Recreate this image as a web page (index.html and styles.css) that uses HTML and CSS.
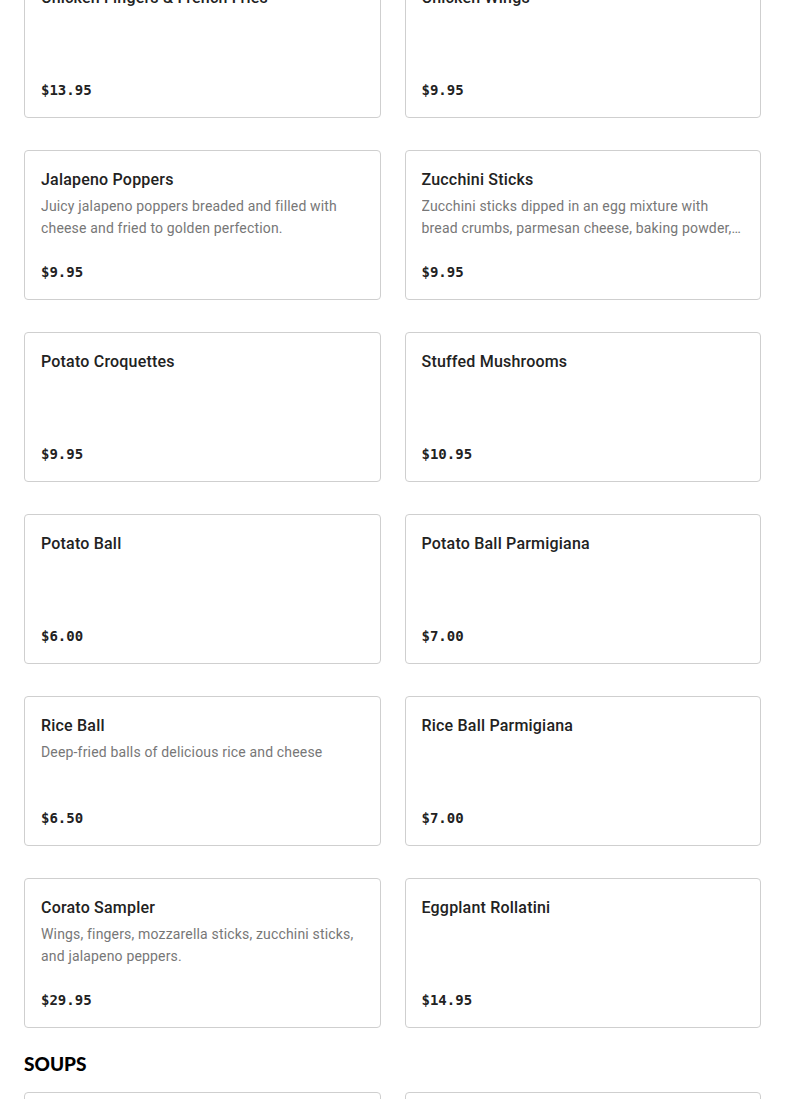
FILE: index.html
```html
<!DOCTYPE html>
<html lang="en">
<head>
<meta charset="utf-8">
<link rel="stylesheet" href="styles.css">
</head>
<body>
<main class="menu">
  <section class="section">
    <div class="grid">
      <div class="card"><div class="title">Chicken Fingers &amp; French Fries</div><div class="desc"></div><div class="price">$13.95</div></div>
      <div class="card"><div class="title">Chicken Wings</div><div class="desc"></div><div class="price">$9.95</div></div>
      <div class="card"><div class="title">Jalapeno Poppers</div><div class="desc">Juicy jalapeno poppers breaded and filled with cheese and fried to golden perfection.</div><div class="price">$9.95</div></div>
      <div class="card"><div class="title">Zucchini Sticks</div><div class="desc">Zucchini sticks dipped in an egg mixture with bread crumbs, parmesan cheese, baking powder, and spices then fried.</div><div class="price">$9.95</div></div>
      <div class="card"><div class="title">Potato Croquettes</div><div class="desc"></div><div class="price">$9.95</div></div>
      <div class="card"><div class="title">Stuffed Mushrooms</div><div class="desc"></div><div class="price">$10.95</div></div>
      <div class="card"><div class="title">Potato Ball</div><div class="desc"></div><div class="price">$6.00</div></div>
      <div class="card"><div class="title">Potato Ball Parmigiana</div><div class="desc"></div><div class="price">$7.00</div></div>
      <div class="card"><div class="title">Rice Ball</div><div class="desc">Deep-fried balls of delicious rice and cheese</div><div class="price">$6.50</div></div>
      <div class="card"><div class="title">Rice Ball Parmigiana</div><div class="desc"></div><div class="price">$7.00</div></div>
      <div class="card"><div class="title">Corato Sampler</div><div class="desc">Wings, fingers, mozzarella sticks, zucchini sticks, and jalapeno peppers.</div><div class="price">$29.95</div></div>
      <div class="card"><div class="title">Eggplant Rollatini</div><div class="desc"></div><div class="price">$14.95</div></div>
    </div>
  </section>
  <section class="section">
    <h2 class="heading">SOUPS</h2>
    <div class="grid">
      <div class="card"><div class="title">Soup of the Day</div><div class="desc"></div><div class="price">$5.95</div></div>
      <div class="card"><div class="title">Pasta Fagioli</div><div class="desc"></div><div class="price">$5.95</div></div>
    </div>
  </section>
</main>
</body>
</html>
```
FILE: styles.css
```css
html, body {
  margin: 0;
  padding: 0;
  background: #fff;
}
body {
  font-family: Roboto, "Liberation Sans", sans-serif;
  color: #222;
  overflow: hidden;
}
.menu {
  padding: 0 24px;
  margin-top: -32px;
}
.grid {
  display: grid;
  grid-template-columns: 1fr 1fr;
  column-gap: 24px;
  row-gap: 32px;
}
.card {
  box-sizing: border-box;
  height: 150px;
  border: 1px solid #cfcfcf;
  border-radius: 4px;
  padding: 16px;
  display: flex;
  flex-direction: column;
  overflow: hidden;
}
.title {
  font-size: 16px;
  font-weight: 500;
  line-height: 26px;
  letter-spacing: 0.2px;
  color: #222;
  white-space: nowrap;
}
.desc {
  margin-top: 2px;
  font-size: 14px;
  line-height: 22px;
  letter-spacing: 0.17px;
  color: #777;
  display: -webkit-box;
  -webkit-line-clamp: 2;
  -webkit-box-orient: vertical;
  overflow: hidden;
}
.price {
  margin-top: auto;
  margin-bottom: 1px;
  font-family: "DejaVu Sans Mono", "Liberation Mono", monospace;
  font-weight: bold;
  font-size: 14px;
  line-height: 20px;
  color: #222;
}
.heading {
  margin: 24px 0 16px;
  font-family: Lato, Roboto, sans-serif;
  font-weight: 900;
  font-size: 19px;
  line-height: 24px;
  color: #000;
}
```
